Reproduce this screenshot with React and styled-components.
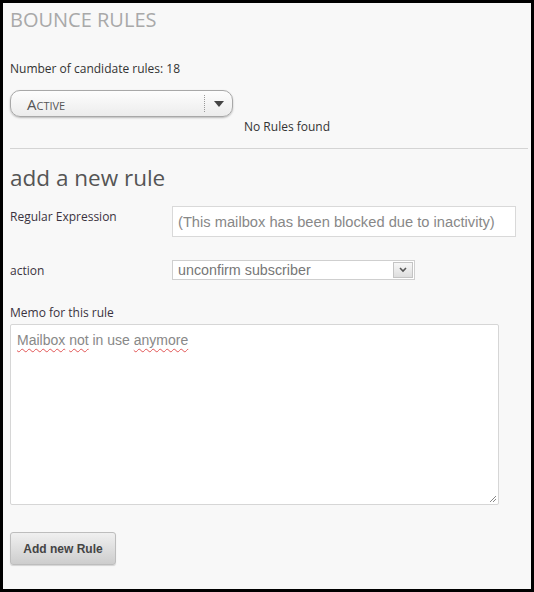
import React from 'react';
import styled, { createGlobalStyle } from 'styled-components';

const Global = createGlobalStyle`
  html, body { margin: 0; padding: 0; background: #000; }
  * { box-sizing: border-box; }
`;

const Frame = styled.div`
  width: 534px;
  height: 592px;
  border: 3px solid #000;
  background: #f8f8f8;
  padding: 4px 7px 0 7px;
  font-family: "Open Sans", "DejaVu Sans", sans-serif;
  font-size: 12px;
  color: #333;
`;

const Title = styled.h1`
  margin: 0;
  font-size: 20px;
  line-height: 26px;
  font-weight: 400;
  color: #a9a9a9;
`;

const Count = styled.p`
  margin: 27px 0 0 0;
  line-height: 18px;
`;

const PillSelect = styled.div`
  margin-top: 12px;
  width: 223px;
  height: 27px;
  border: 1px solid #a8a8a8;
  border-radius: 10px;
  background: linear-gradient(#fdfdfd, #ececec);
  box-shadow: 0 1px 2px rgba(0, 0, 0, 0.25);
  display: flex;
  align-items: center;
  padding-left: 16px;
`;

const PillText = styled.span`
  flex: 1;
  font-variant: small-caps;
  font-size: 15px;
  color: #555;
`;

const PillArrow = styled.span`
  width: 28px;
  height: 17px;
  border-left: 1px dotted #999;
  display: flex;
  align-items: center;
  justify-content: center;
`;

const Empty = styled.p`
  margin: 1px 0 0 234px;
  line-height: 18px;
`;

const Rule = styled.hr`
  margin: 12px -4px 0 0;
  border: none;
  border-top: 1px solid #d4d4d4;
`;

const SubTitle = styled.h2`
  margin: 15px 0 0 0;
  font-size: 22.5px;
  line-height: 28px;
  font-weight: 400;
  color: #555;
`;

const Row = styled.div`
  display: grid;
  grid-template-columns: 162px auto;
  align-items: start;
  margin-top: ${p => p.$gap}px;
`;

const Label = styled.label`
  display: block;
  line-height: 18px;
  padding-top: ${p => p.$pad || 0}px;
  color: #3a3340;
`;

const TextInput = styled.div`
  width: 344px;
  height: 31px;
  background: #fff;
  border: 1px solid #d9d9d9;
  padding-left: 5px;
  display: flex;
  align-items: center;
  font-family: "Liberation Sans", Arial, sans-serif;
  font-size: 14.7px;
  color: #888;
`;

const Select = styled.div`
  width: 243px;
  height: 20px;
  background: #fff;
  border: 1px solid #cfcfcf;
  display: flex;
  align-items: center;
  padding-left: 5px;
  font-family: "Liberation Sans", Arial, sans-serif;
  font-size: 14.3px;
  color: #777;
`;

const SelectText = styled.span`
  flex: 1;
`;

const SelectBtn = styled.span`
  width: 20px;
  height: 16px;
  margin-right: 1px;
  border: 1px solid #c4c4c4;
  background: linear-gradient(#f7f7f7, #dedede);
  display: flex;
  align-items: center;
  justify-content: center;
`;

const MemoLabel = styled.label`
  display: block;
  margin-top: 24px;
  line-height: 18px;
  color: #3a3340;
`;

const Memo = styled.div`
  position: relative;
  margin-top: 2px;
  width: 489px;
  height: 181px;
  background: #fff;
  border: 1px solid #d6d6d6;
  border-radius: 2px;
  padding: 7px 6px;
  font-family: "Liberation Sans", Arial, sans-serif;
  font-size: 14px;
  color: #888;
`;

const Misspelt = styled.span`
  text-decoration: underline wavy #e25555;
  text-decoration-thickness: 1px;
  text-underline-offset: 3px;
`;

const Grip = styled.svg`
  position: absolute;
  right: 1px;
  bottom: 1px;
`;

const Button = styled.button`
  display: block;
  margin-top: 27px;
  width: 106px;
  height: 33px;
  border: 1px solid #bdbdbd;
  border-radius: 3px;
  background: linear-gradient(#f0f0f0, #cdcdcd);
  box-shadow: 0 1px 1px rgba(0, 0, 0, 0.15);
  font-family: "Liberation Sans", Arial, sans-serif;
  font-size: 12px;
  font-weight: 700;
  color: #444;
  padding: 0;
`;

export default function App() {
  return (
    <>
      <Global />
      <Frame>
        <Title>BOUNCE RULES</Title>
        <Count>Number of candidate rules: 18</Count>
        <PillSelect>
          <PillText>Active</PillText>
          <PillArrow>
            <svg width="10" height="6" viewBox="0 0 10 6">
              <path d="M0 0 L10 0 L5 6 Z" fill="#444" />
            </svg>
          </PillArrow>
        </PillSelect>
        <Empty>No Rules found</Empty>
        <Rule />
        <SubTitle>add a new rule</SubTitle>
        <Row $gap={14}>
          <Label $pad={2}>Regular Expression</Label>
          <TextInput>(This mailbox has been blocked due to inactivity)</TextInput>
        </Row>
        <Row $gap={23}>
          <Label $pad={2}>action</Label>
          <Select>
            <SelectText>unconfirm subscriber</SelectText>
            <SelectBtn>
              <svg width="8" height="6" viewBox="0 0 8 6">
                <path d="M1 1 L4 4 L7 1" stroke="#555" strokeWidth="1.6" fill="none" />
              </svg>
            </SelectBtn>
          </Select>
        </Row>
        <MemoLabel>Memo for this rule</MemoLabel>
        <Memo>
          <Misspelt>Mailbox</Misspelt> <Misspelt>not</Misspelt> in use <Misspelt>anymore</Misspelt>
          <Grip width="9" height="9" viewBox="0 0 9 9">
            <path d="M8 2 L2 8 M8 5 L5 8" stroke="#888" strokeWidth="1" />
          </Grip>
        </Memo>
        <Button>Add new Rule</Button>
      </Frame>
    </>
  );
}
